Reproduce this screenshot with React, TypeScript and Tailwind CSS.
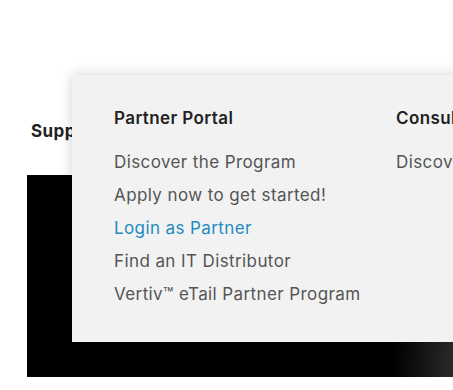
const partnerLinks = [
  { label: 'Discover the Program' },
  { label: 'Apply now to get started!' },
  { label: 'Login as Partner', active: true },
  { label: 'Find an IT Distributor' },
  { label: 'Vertiv™ eTail Partner Program' },
]

export default function App() {
  return (
    <div className="relative h-[390px] w-[453px] overflow-hidden bg-white font-['Inter',sans-serif] tracking-[0.4px]">
      <div className="pt-[121px] pl-[31px]">
        <h3 className="text-[17px] font-bold leading-5 text-[#222]">Support</h3>
      </div>
      <div className="ml-[27px] mt-[34px] h-[202px] bg-[linear-gradient(90deg,#000_0%,#000_86%,#2a2a2a_100%)]" />

      <div className="absolute left-[72px] top-[75px] flex h-[267px] w-[520px] bg-[#f2f2f2] pl-[42px] pt-[33px] shadow-[0_0_12px_rgba(0,0,0,0.18)]">
        <div className="w-[282px] shrink-0">
          <h4 className="text-[17px] font-semibold leading-5 text-[#222]">Partner Portal</h4>
          <ul className="mt-[24px] flex flex-col gap-[13px]">
            {partnerLinks.map((l) => (
              <li
                key={l.label}
                className={`text-[17px] leading-5 ${l.active ? 'text-[#1f8cc0]' : 'text-[#555]'}`}
              >
                {l.label}
              </li>
            ))}
          </ul>
        </div>
        <div className="shrink-0">
          <h4 className="text-[17px] font-semibold leading-5 text-[#222] whitespace-nowrap">Consultant Portal</h4>
          <ul className="mt-[24px]">
            <li className="text-[17px] leading-5 text-[#555] whitespace-nowrap">Discover the Program</li>
          </ul>
        </div>
      </div>
    </div>
  )
}
